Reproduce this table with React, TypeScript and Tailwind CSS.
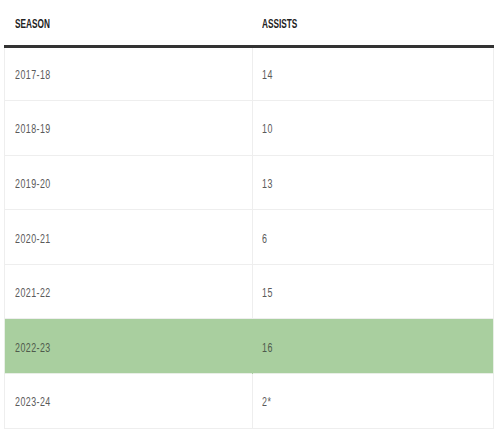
const rows = [
  { season: "2017-18", assists: "14" },
  { season: "2018-19", assists: "10" },
  { season: "2019-20", assists: "13" },
  { season: "2020-21", assists: "6" },
  { season: "2021-22", assists: "15" },
  { season: "2022-23", assists: "16", highlight: true },
  { season: "2023-24", assists: "2*" },
]

function Narrow({ children, head }: { children: React.ReactNode; head?: boolean }) {
  return (
    <span
      className={
        head
          ? "inline-block origin-left scale-x-[0.66] whitespace-nowrap"
          : "inline-block origin-left scale-x-[0.74] whitespace-nowrap"
      }
    >
      {children}
    </span>
  )
}

export default function App() {
  return (
    <div className="w-[500px] h-[440px] bg-white pl-[4px] pr-[6px]">
      <table className="w-full border-collapse [font-family:'Liberation_Sans',Arial,sans-serif]">
        <thead>
          <tr className="h-[46px] border-b-[3px] border-[#333]">
            <th className="w-[248px] pl-[10px] pt-[4px] text-left text-[12.5px] font-bold text-[#222]">
              <Narrow head>SEASON</Narrow>
            </th>
            <th className="pl-[9px] pt-[4px] text-left text-[12.5px] font-bold text-[#222]">
              <Narrow head>ASSISTS</Narrow>
            </th>
          </tr>
        </thead>
        <tbody>
          {rows.map((row) => (
            <tr
              key={row.season}
              className={
                row.highlight
                  ? "h-[54.6px] bg-[#a9cf9f] border border-[#e8efe6]"
                  : "h-[54.6px] border border-[#eeeeee]"
              }
            >
              <td
                className={
                  row.highlight
                    ? "pl-[10px] pt-[3px] text-[12px] text-[#4f5a4c] tracking-[0.6px] border-r border-transparent"
                    : "pl-[10px] pt-[3px] text-[12px] text-[#5a5a5a] tracking-[0.6px] border-r border-[#eeeeee]"
                }
              >
                <Narrow>{row.season}</Narrow>
              </td>
              <td
                className={
                  row.highlight
                    ? "pl-[9px] pt-[3px] text-[12px] text-[#4f5a4c] tracking-[0.6px]"
                    : "pl-[9px] pt-[3px] text-[12px] text-[#5a5a5a] tracking-[0.6px]"
                }
              >
                <Narrow>{row.assists}</Narrow>
              </td>
            </tr>
          ))}
        </tbody>
      </table>
    </div>
  )
}
